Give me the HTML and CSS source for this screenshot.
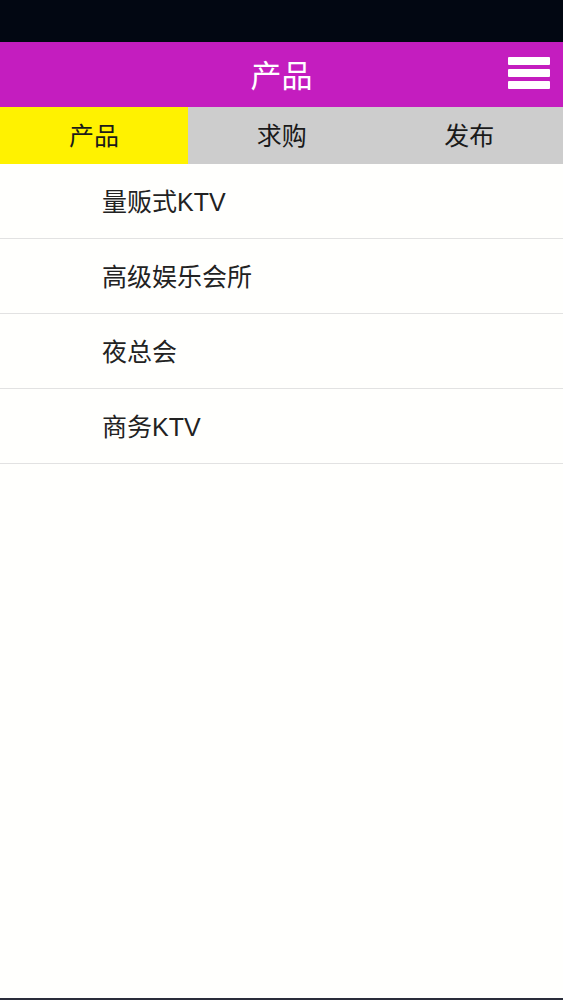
FILE: index.html
```html
<!DOCTYPE html>
<html lang="zh-CN">
<head>
  <meta charset="UTF-8" />
  <meta name="viewport" content="width=device-width, initial-scale=1.0">
  <title>产品</title>
  <link rel="stylesheet" href="styles.css">
</head>
<body>
  <div class="screen">
    <div class="status-bar"></div>

    <header class="top-bar">
      <h1>产品</h1>
      <button type="button" class="menu-btn" aria-label="菜单">
        <span></span>
        <span></span>
        <span></span>
      </button>
    </header>

    <nav class="tabs">
      <a class="tab active">产品</a>
      <a class="tab">求购</a>
      <a class="tab">发布</a>
    </nav>

    <main class="content">
      <ul class="list">
        <li>量贩式KTV</li>
        <li>高级娱乐会所</li>
        <li>夜总会</li>
        <li>商务KTV</li>
      </ul>
    </main>

    <div class="bottom-edge"></div>
  </div>
</body>
</html>
```

FILE: styles.css
```css
:root {
  --magenta: #c41dbf;
  --yellow: #fff200;
  --tab-grey: #cdcdcd;
  --divider: #e2e2e2;
  --text: #222222;
}

* {
  margin: 0;
  padding: 0;
  box-sizing: border-box;
}

body {
  background-color: #fffffd;
  font-family: 'Liberation Sans', 'Noto Sans CJK SC', sans-serif;
  color: var(--text);
}

.screen {
  display: flex;
  flex-direction: column;
  height: 1000px;
}

.status-bar {
  height: 42px;
  background-color: #020712;
}

.top-bar {
  height: 65px;
  background-color: var(--magenta);
  display: flex;
  align-items: center;
  justify-content: center;
  position: relative;
}

.top-bar h1 {
  color: #ffffff;
  font-size: 31px;
  font-weight: 400;
  line-height: 1;
  padding-top: 3px;
}

.menu-btn {
  position: absolute;
  right: 13px;
  top: 15px;
  width: 42px;
  display: flex;
  flex-direction: column;
  gap: 4px;
  background: none;
  border: none;
}

.menu-btn span {
  display: block;
  height: 8px;
  background-color: #ffffff;
  border-radius: 1px;
}

.tabs {
  display: grid;
  grid-template-columns: 188px 1fr 1fr;
  height: 57px;
  background-color: var(--tab-grey);
}

.tab {
  display: flex;
  align-items: center;
  justify-content: center;
  padding-bottom: 4px;
  font-size: 25px;
  color: #1a1a1a;
}

.tab.active {
  background-color: var(--yellow);
}

.content {
  flex: 1;
}

.list {
  list-style: none;
}

.list li {
  height: 75px;
  display: flex;
  align-items: center;
  padding-left: 102px;
  padding-bottom: 3px;
  font-size: 25px;
  border-bottom: 1px solid var(--divider);
}

.bottom-edge {
  height: 2px;
  background-color: #2a2d3a;
}
```
